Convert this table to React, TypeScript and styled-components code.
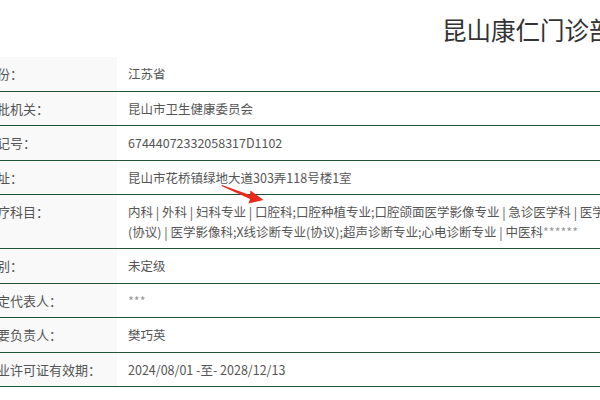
import React from "react";
import styled, { createGlobalStyle } from "styled-components";

const Global = createGlobalStyle`
  html, body { margin: 0; padding: 0; background: #fff; }
  body { font-family: "Noto Sans CJK SC", "Microsoft YaHei", sans-serif; }
`;

const Page = styled.div`
  width: 600px;
  height: 400px;
  overflow: hidden;
  position: relative;
  background: #fff;
`;

const Header = styled.header`
  padding: 12px 0 0 442px;
  height: 36px;
  margin-bottom: 9px;
  white-space: nowrap;
`;

const Title = styled.h1`
  margin: 0;
  font-size: 24.5px;
  line-height: 36px;
  font-weight: 400;
  color: #333;
`;

const Table = styled.div`
  margin-left: -27px;
  width: 1100px;
  display: flex;
  flex-direction: column;
`;

const Row = styled.div`
  display: flex;
  border-bottom: 1px solid #21553a;
`;

const Label = styled.div`
  flex: 0 0 144px;
  box-sizing: border-box;
  padding: 7px 11px;
  background: #f9f9f9;
  color: #555;
  font-size: 13px;
  line-height: 19.5px;
  white-space: nowrap;
`;

const Value = styled.div`
  flex: 1;
  padding: 7px 11px;
  color: #555;
  font-size: 12.5px;
  line-height: 19.5px;
  white-space: nowrap;
`;

const Faint = styled.span`
  color: #999;
`;

const Arrow = styled.svg`
  position: absolute;
  left: 218px;
  top: 180px;
  width: 50px;
  height: 26px;
  pointer-events: none;
`;

const rows: { label: string; value: React.ReactNode }[] = [
  { label: "省份：", value: "江苏省" },
  { label: "审批机关：", value: "昆山市卫生健康委员会" },
  { label: "登记号：", value: "67444072332058317D1102" },
  { label: "地址：", value: "昆山市花桥镇绿地大道303弄118号楼1室" },
  {
    label: "诊疗科目：",
    value: (
      <>
        内科 | 外科 | 妇科专业 | 口腔科;口腔种植专业;口腔颌面医学影像专业 | 急诊医学科 | 医学检验科;临床化学检验专业
        <br />
        (协议) | 医学影像科;X线诊断专业(协议);超声诊断专业;心电诊断专业 | 中医科<Faint>******</Faint>
      </>
    ),
  },
  { label: "类别：", value: "未定级" },
  { label: "法定代表人：", value: <Faint>***</Faint> },
  { label: "主要负责人：", value: "樊巧英" },
  { label: "执业许可证有效期：", value: "2024/08/01 -至- 2028/12/13" },
];

export default function App() {
  return (
    <Page>
      <Global />
      <Header>
        <Title>昆山康仁门诊部</Title>
      </Header>
      <Table>
        {rows.map((r) => (
          <Row key={r.label}>
            <Label>{r.label}</Label>
            <Value>{r.value}</Value>
          </Row>
        ))}
      </Table>
      <Arrow viewBox="0 0 50 26">
        <polygon points="4,5 32,15 32.5,10.5 45.5,20 30.5,23.5 32,19 3.5,6" fill="#e8291c" />
      </Arrow>
    </Page>
  );
}
